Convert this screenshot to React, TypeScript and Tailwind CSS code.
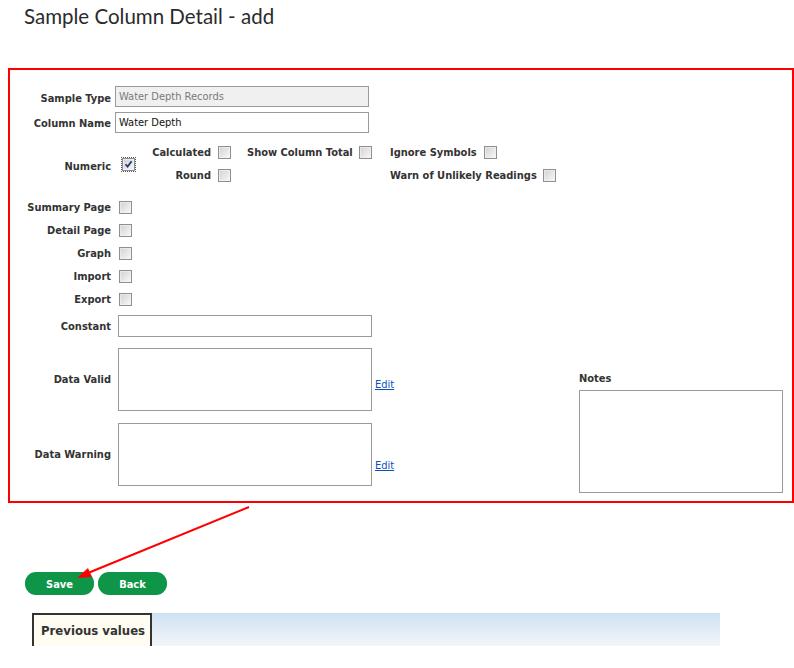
import React from "react";

const FONT = "font-['DejaVu_Sans_Condensed','DejaVu_Sans',sans-serif]";
const LBL = "font-bold text-[11px] text-[#333] leading-[13px] whitespace-nowrap";

function Cb({ checked }: { checked?: boolean }) {
  return (
    <span className="relative inline-block w-[13px] h-[13px] border border-[#8e8f8f] bg-[linear-gradient(135deg,#d2d2d2,#f8f8f8)] shrink-0">
      <span className="absolute inset-0 border border-[#f4f4f4] opacity-60" />
      {checked && (
        <svg className="absolute left-[1px] top-[1px]" width="9" height="9" viewBox="0 0 9 9">
          <path d="M1.5 4.2 L3.6 6.6 L7.6 1.2" stroke="#21357a" strokeWidth="1.7" fill="none" />
        </svg>
      )}
    </span>
  );
}

function CbRow({ label }: { label: string }) {
  return (
    <div className="flex items-center h-[23px]">
      <div className={`w-[101px] text-right ${LBL}`}>{label}</div>
      <div className="ml-[8px] flex items-center">
        <Cb />
      </div>
    </div>
  );
}

export default function App() {
  return (
    <div className={`relative w-[794px] h-[668px] bg-white overflow-hidden ${FONT}`}>
      <h1 className="pl-[24px] pt-[2px] h-[68px] text-[20.5px] leading-[28px] text-[#2b2b2b] font-['Lato',sans-serif] font-normal">
        Sample Column Detail - add
      </h1>

      <div className="ml-[8px] w-[786px] border-2 border-[#ff0000] pt-[16px] pb-[8px]">
        {/* Sample Type */}
        <div className="flex items-center h-[21px]">
          <div className={`w-[101px] text-right ${LBL} pt-[3px]`}>Sample Type</div>
          <div className="ml-[4px] w-[254px] h-[21px] border border-[#9a9a9a] bg-[#f0f0f0] text-[#7a7a7a] text-[11px] pl-[3px] pt-[2px] flex items-center">
            Water Depth Records
          </div>
        </div>
        {/* Column Name */}
        <div className="mt-[5px] flex items-center h-[21px]">
          <div className={`w-[101px] text-right ${LBL} pt-[2px]`}>Column Name</div>
          <div className="ml-[4px] w-[254px] h-[21px] border border-[#9a9a9a] bg-white text-[#111] text-[11px] pl-[3px] pt-[2px] flex items-center">
            Water Depth
          </div>
        </div>

        {/* Numeric section */}
        <div className="mt-[8px] flex h-[46px]">
          <div className={`w-[101px] text-right ${LBL} self-center mt-[4px]`}>Numeric</div>
          <div className="ml-[11px] self-center flex items-center outline-1 outline-dotted outline-[#555] outline-offset-[0px]">
            <Cb checked />
          </div>
          <div className="ml-[1px] grid grid-cols-[111px_143px_auto] grid-rows-[23px_23px]">
            <div className="flex items-center justify-end pr-[16px]">
              <span className={LBL}>Calculated</span>
              <span className="ml-[7px] flex"><Cb /></span>
            </div>
            <div className="flex items-center">
              <span className={LBL}>Show Column Total</span>
              <span className="ml-[6px] flex"><Cb /></span>
            </div>
            <div className="flex items-center">
              <span className={LBL}>Ignore Symbols</span>
              <span className="ml-[7px] flex"><Cb /></span>
            </div>
            <div className="flex items-center justify-end pr-[16px]">
              <span className={LBL}>Round</span>
              <span className="ml-[7px] flex"><Cb /></span>
            </div>
            <div />
            <div className="flex items-center">
              <span className={LBL}>Warn of Unlikely Readings</span>
              <span className="ml-[6px] flex"><Cb /></span>
            </div>
          </div>
        </div>

        <div className="mt-[9px]">
          <CbRow label="Summary Page" />
          <CbRow label="Detail Page" />
          <CbRow label="Graph" />
          <CbRow label="Import" />
          <CbRow label="Export" />
        </div>

        {/* Constant */}
        <div className="mt-[4px] flex items-center h-[22px]">
          <div className={`w-[101px] text-right ${LBL}`}>Constant</div>
          <div className="ml-[7px] w-[254px] h-[22px] border border-[#9a9a9a] bg-white" />
        </div>

        {/* Lower section */}
        <div className="mt-[11px] flex">
          <div className="flex flex-col pb-[7px]">
            <div className="flex">
              <div className={`w-[101px] text-right ${LBL} self-center`}>Data Valid</div>
              <div className="ml-[7px] w-[254px] h-[63px] border border-[#9a9a9a] bg-white" />
              <a className="ml-[3px] self-end mb-[20px] text-[11px] leading-[13px] text-[#0b50bd] underline">Edit</a>
            </div>
            <div className="mt-[12px] flex">
              <div className={`w-[101px] text-right ${LBL} self-center`}>Data Warning</div>
              <div className="ml-[7px] w-[254px] h-[63px] border border-[#9a9a9a] bg-white" />
              <a className="ml-[3px] self-end mb-[14px] text-[11px] leading-[13px] text-[#0b50bd] underline">Edit</a>
            </div>
          </div>
          <div className="ml-auto mr-[9px] self-end flex flex-col">
            <div className={`${LBL} mb-[5px]`}>Notes</div>
            <div className="w-[204px] h-[103px] border border-[#9a9a9a] bg-white" />
          </div>
        </div>
      </div>

      {/* Buttons */}
      <div className="mt-[69px] ml-[25px] flex gap-[4px]">
        <button className="w-[69px] h-[23px] rounded-[11px] bg-[#0f9548] text-white font-bold text-[11px] leading-[23px] pt-[1px]">Save</button>
        <button className="w-[69px] h-[23px] rounded-[11px] bg-[#0f9548] text-white font-bold text-[11px] leading-[23px] pt-[1px]">Back</button>
      </div>

      {/* Previous values */}
      <div className="mt-[18px] ml-[32px] w-[688px] h-[33px] flex bg-[linear-gradient(180deg,#cde2f3,#f2f5f8)]">
        <div className="w-[120px] h-[33px] border-t-2 border-l-2 border-r-2 border-[#333] bg-[#fffcf2] pl-[7px] flex items-center">
          <span className="font-bold text-[13px] text-[#333] whitespace-nowrap">Previous values</span>
        </div>
      </div>

      {/* Annotation arrow */}
      <svg className="absolute left-0 top-0 pointer-events-none" width="794" height="668">
        <line x1="249" y1="507" x2="88" y2="573" stroke="#ff0000" strokeWidth="2" />
        <polygon points="77,578 92,577 88,568" fill="#ff0000" />
      </svg>
    </div>
  );
}
